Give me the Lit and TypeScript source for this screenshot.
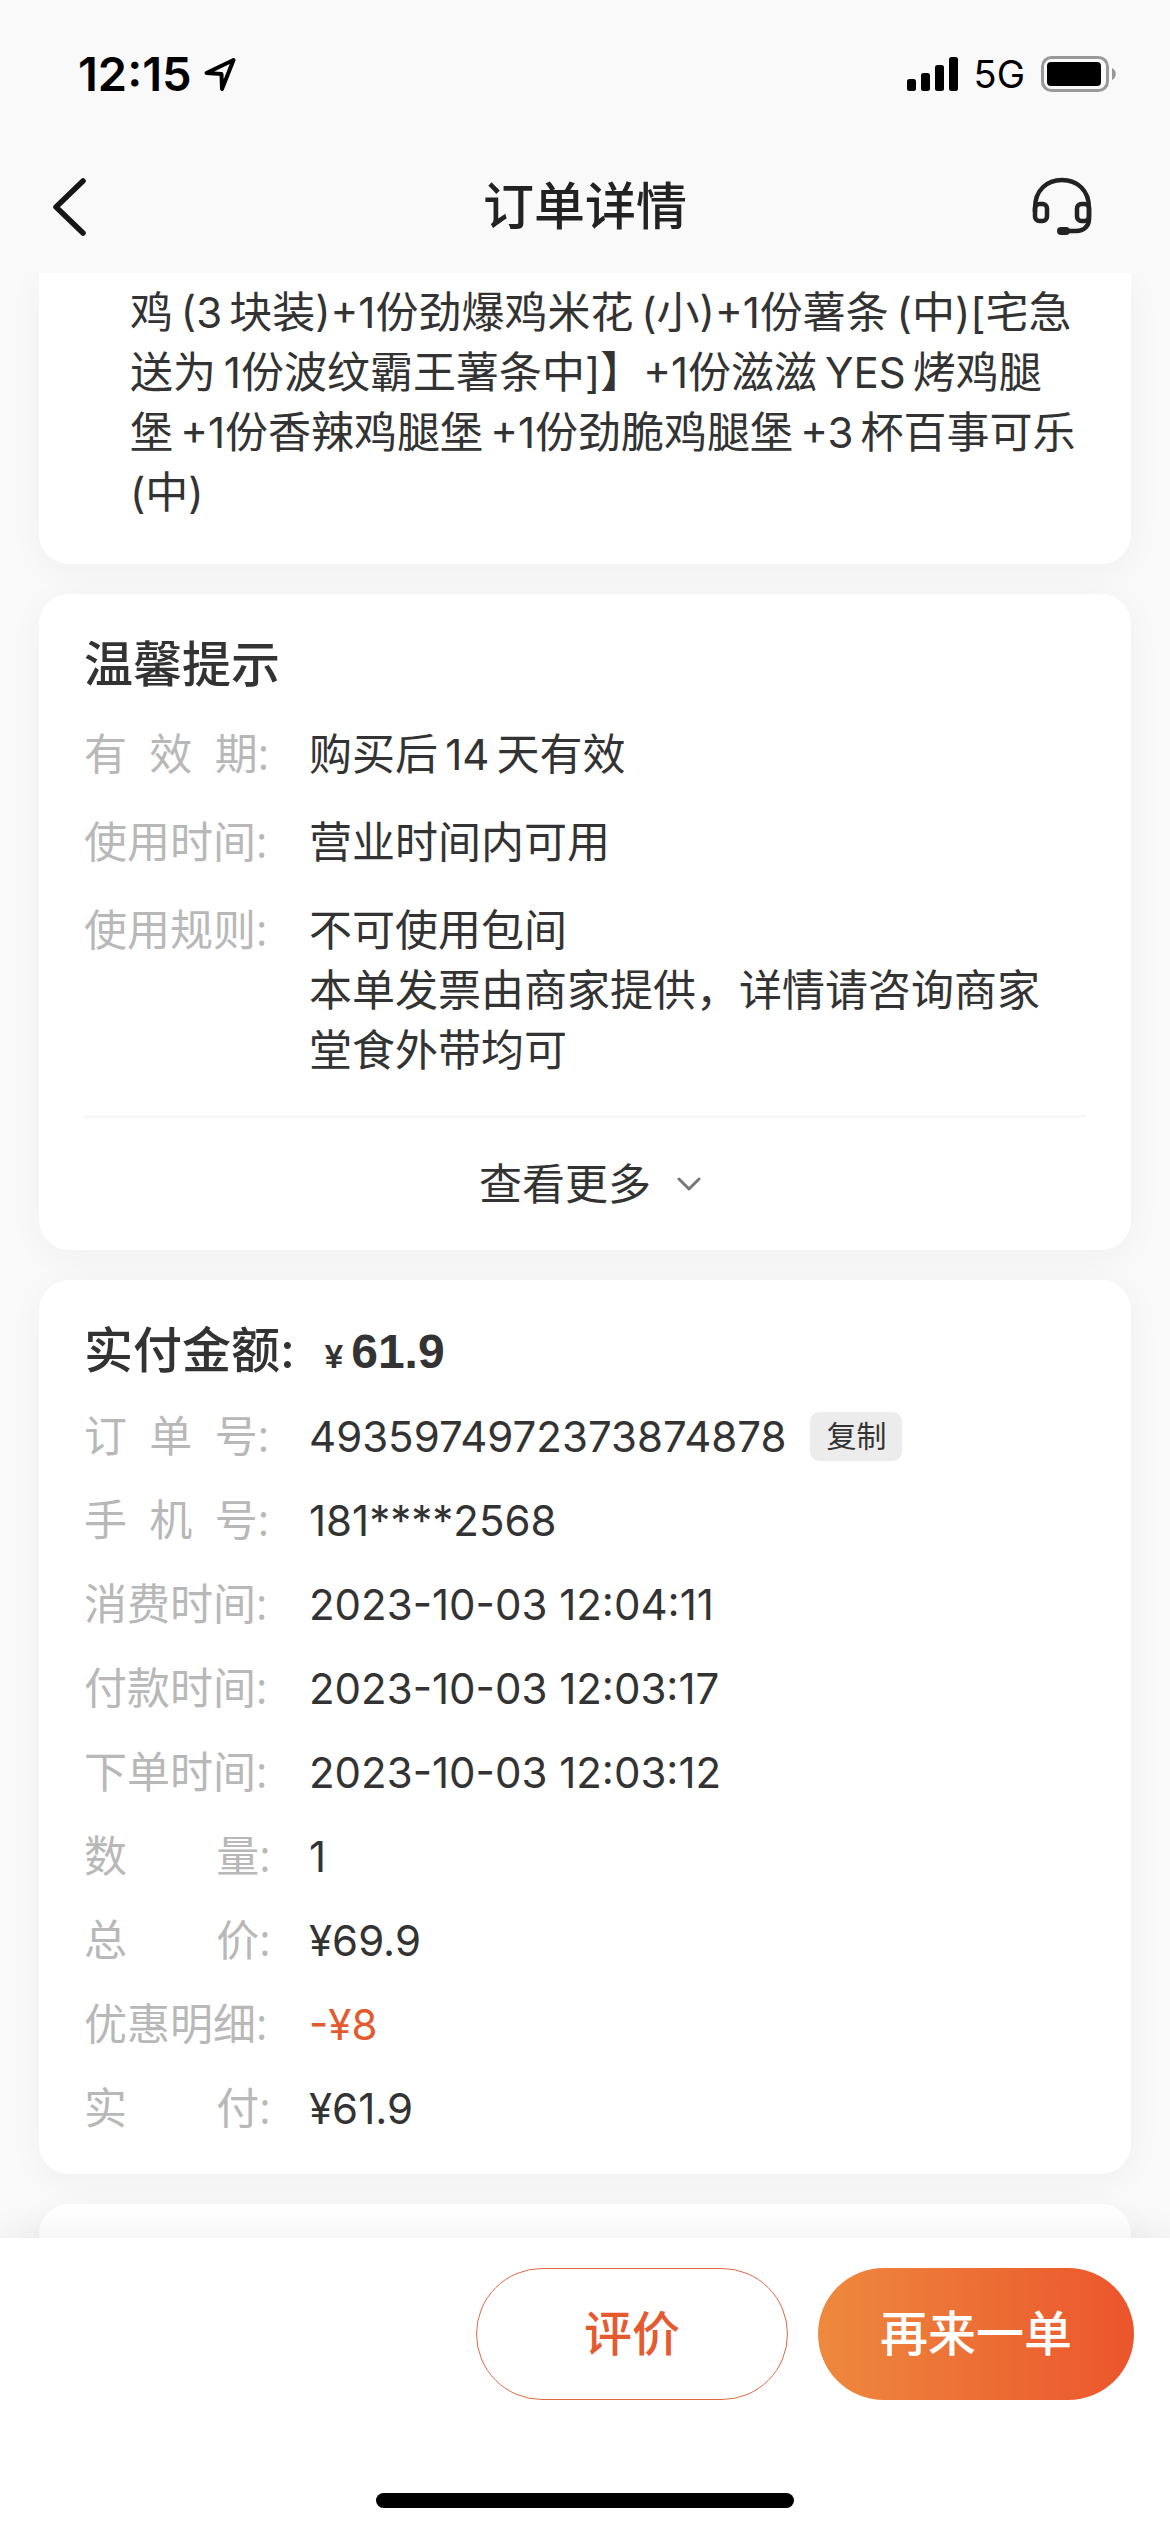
import { LitElement, html, css, svg } from "lit";
import { customElement } from "lit/decorators.js";

interface Row {
  label: string;
  value: string | string[];
  tone?: "accent";
  copyable?: boolean;
}

const PACKAGE_LINES = [
  "鸡\u2009(3\u2006块装)+1份劲爆鸡米花\u2009(小)+1份薯条\u2009(中)[宅急",
  "送为\u20091份波纹霸王薯条中]】+1份滋滋\u2009YES\u2006烤鸡腿",
  "堡\u2006+1份香辣鸡腿堡\u2006+1份劲脆鸡腿堡\u2006+3\u2006杯百事可乐",
  "(中)",
];

const TIPS: Row[] = [
  { label: "有  效  期:", value: "购买后\u200614\u2006天有效" },
  { label: "使用时间:", value: "营业时间内可用" },
  {
    label: "使用规则:",
    value: ["不可使用包间", "本单发票由商家提供，详情请咨询商家", "堂食外带均可"],
  },
];

const ORDER: Row[] = [
  { label: "订  单  号:", value: "4935974972373874878", copyable: true },
  { label: "手  机  号:", value: "181****2568" },
  { label: "消费时间:", value: "2023-10-03 12:04:11" },
  { label: "付款时间:", value: "2023-10-03 12:03:17" },
  { label: "下单时间:", value: "2023-10-03 12:03:12" },
  { label: "数        量:", value: "1" },
  { label: "总        价:", value: "¥69.9" },
  { label: "优惠明细:", value: "-¥8", tone: "accent" },
  { label: "实        付:", value: "¥61.9" },
];

/** Splits a string so that Latin runs can be set slightly smaller than Chinese ones. */
const mixed = (text: string) =>
  text
    .split(/([\x20-\x7e¥]+)/)
    .filter((part) => part !== "")
    .map((part) =>
      /^[\x20-\x7e¥]+$/.test(part) ? html`<span class="latin">${part}</span>` : part,
    );

const locationIcon = svg`<svg class="icon" width="32" height="34" viewBox="0 0 32 34" fill="none" stroke="#000" stroke-width="4" stroke-linejoin="round" aria-hidden="true"><path d="M2.500 16L29.500 3L18 32L17.500 17Z"/></svg>`;

const signalIcon = svg`<svg class="icon" width="51" height="34" viewBox="0 0 51 34" aria-hidden="true"><rect y="22" width="9" height="12" rx="2.500"/><rect x="14" y="16" width="9" height="18" rx="2.500"/><rect x="28" y="8" width="9" height="26" rx="2.500"/><rect x="42" width="9" height="34" rx="2.500"/></svg>`;

const batteryIcon = svg`<svg class="icon" width="75" height="36" viewBox="0 0 75 36" aria-hidden="true"><rect x="1.500" y="1.500" width="65" height="33" rx="9" fill="none" stroke="#999" stroke-width="3"/><rect x="6" y="6" width="54" height="24" rx="4"/><path d="M71 12c5 2 5 10 0 12z" fill="#999"/></svg>`;

const backIcon = svg`<svg class="icon" width="36" height="60" viewBox="0 0 36 60" fill="none" stroke="#161616" stroke-width="5.500" stroke-linecap="round" stroke-linejoin="round" aria-hidden="true"><path d="M32 4L5 30L32 56"/></svg>`;

const headsetIcon = svg`<svg class="icon" width="60" height="60" viewBox="0 0 60 60" fill="none" stroke="#222" stroke-width="4.500" aria-hidden="true"><path d="M3 35V31C3 13 15 3 30 3S57 13 57 31V42C57 49 52 54 44 54H32"/><rect x="3" y="27" width="12" height="17" rx="4.500"/><rect x="45" y="27" width="12" height="17" rx="4.500"/><rect x="25" y="50" width="13" height="8" rx="4" fill="#222" stroke="none"/></svg>`;

const chevronIcon = svg`<svg class="icon" width="24" height="14" viewBox="0 0 24 14" fill="none" stroke="#777" stroke-width="3" stroke-linecap="round" stroke-linejoin="round" aria-hidden="true"><path d="M2 2L12 12L22 2"/></svg>`;

@customElement("app-root")
export class AppRoot extends LitElement {
  static styles = css`
    :host {
      display: flex;
      flex-direction: column;
      height: 100vh;
      overflow: hidden;
      background: #f9f9f9;
      color: #333;
      font-family: Inter, "Noto Sans CJK SC", sans-serif;
      font-size: 43px;
      line-height: 60px;
    }
    * {
      box-sizing: border-box;
    }
    h1, h2, p, dl, dd {
      margin: 0;
    }
    button {
      margin: 0;
      padding: 0;
      border: 0;
      background: none;
      color: inherit;
      font: inherit;
    }
    .icon {
      display: block;
      flex: none;
    }
    .latin {
      font-size: 42px;
      line-height: 1;
    }
    .status {
      display: flex;
      justify-content: space-between;
      align-items: center;
      padding: 44px 54px 0 78px;
      color: #000;
    }
    .time, .signals {
      display: flex;
      align-items: center;
    }
    .time {
      gap: 12px;
      font-size: 47px;
      font-weight: 600;
    }
    .signals {
      gap: 16px;
      font-size: 38px;
    }
    .nav {
      display: grid;
      grid-template-columns: 1fr auto 1fr;
      align-items: center;
      height: 132px;
      margin-top: 37px;
      color: #222;
    }
    .back {
      justify-self: start;
      padding: 0 51px;
    }
    .service {
      justify-self: end;
      padding: 0 78px;
    }
    .title {
      font-size: 51px;
      font-weight: 500;
    }
    .content {
      display: flex;
      flex: 1;
      flex-direction: column;
      gap: 30px;
      min-height: 0;
      overflow: hidden;
      padding: 0 39px;
    }
    .card {
      flex: none;
      padding: 41px 45px 36px;
      border-radius: 30px;
      background: #fff;
      box-shadow: 0 6px 36px rgba(0, 0, 0, 0.04);
    }
    .package {
      padding: 9px 45px 42px 91px;
      border-radius: 0 0 30px 30px;
      white-space: nowrap;
    }
    .tips {
      padding-bottom: 0;
    }
    .next {
      min-height: 120px;
    }
    .heading {
      display: flex;
      align-items: baseline;
      height: 60px;
      font-size: 49px;
      font-weight: 500;
    }
    .currency, .amount {
      font-family: "Liberation Sans", sans-serif;
      font-weight: 700;
    }
    .currency {
      margin: 0 8px 0 30px;
      font-size: 33px;
    }
    .amount {
      font-size: 48px;
    }
    .rows {
      display: flex;
      flex-direction: column;
      gap: 24px;
      margin-top: 25px;
    }
    .tips .rows {
      gap: 28px;
      margin-top: 29px;
    }
    .row {
      display: flex;
    }
    .label {
      flex: none;
      width: 225px;
      color: #b8b8b8;
      font-family: "Open Sans", "Noto Sans CJK SC", sans-serif;
      white-space: pre;
    }
    .value {
      display: flex;
      flex-wrap: wrap;
      align-items: center;
      gap: 0 24px;
    }
    .line {
      display: block;
      width: 100%;
    }
    .accent {
      color: #e45a2f;
    }
    .copy {
      height: 49px;
      padding: 0 16px;
      border-radius: 9px;
      background: #ececec;
      font-size: 30px;
      line-height: 49px;
    }
    .more {
      display: flex;
      align-items: center;
      justify-content: center;
      gap: 26px;
      width: 100%;
      height: 135px;
      margin-top: 35px;
      padding-left: 10px;
      border-top: 3px solid #f8f8f8;
    }
    .actions {
      position: relative;
      display: flex;
      flex: none;
      flex-direction: column;
      padding: 30px 36px 24px;
      background: #fff;
      box-shadow: 0 0 36px rgba(0, 0, 0, 0.08);
    }
    .buttons {
      display: flex;
      justify-content: flex-end;
      gap: 30px;
    }
    .action {
      height: 132px;
      padding: 0 60px;
      border-radius: 66px;
      font-size: 48px;
      font-weight: 500;
    }
    .review {
      min-width: 312px;
      border: 1px solid #dc6a45;
      color: #e65a30;
    }
    .again {
      min-width: 316px;
      background: linear-gradient(90deg, #ee893e, #eb552c);
      color: #fff;
    }
    .home {
      align-self: center;
      width: 418px;
      height: 15px;
      margin-top: 93px;
      border-radius: 8px;
      background: #000;
    }
  `;

  private renderRow(row: Row) {
    const lines = Array.isArray(row.value) ? row.value : null;
    return html`
      <div class="row">
        <dt class="label">${row.label}</dt>
        <dd class="value ${row.tone ?? ""}">
          ${lines
            ? lines.map((line) => html`<span class="line">${line}</span>`)
            : html`<span>${mixed(row.value as string)}</span>`}
          ${row.copyable ? html`<button class="copy" type="button">复制</button>` : ""}
        </dd>
      </div>
    `;
  }

  render() {
    return html`
      <div class="status">
        <div class="time"><span>12:15</span>${locationIcon}</div>
        <div class="signals">${signalIcon}<span>5G</span>${batteryIcon}</div>
      </div>
      <header class="nav">
        <button class="back" type="button" aria-label="返回">${backIcon}</button>
        <h1 class="title">订单详情</h1>
        <button class="service" type="button" aria-label="客服">${headsetIcon}</button>
      </header>
      <main class="content">
        <section class="card package">
          <p>${PACKAGE_LINES.map((line) => html`<span class="line">${mixed(line)}</span>`)}</p>
        </section>
        <section class="card tips">
          <h2 class="heading">温馨提示</h2>
          <dl class="rows">${TIPS.map((row) => this.renderRow(row))}</dl>
          <button class="more" type="button"><span>查看更多</span>${chevronIcon}</button>
        </section>
        <section class="card">
          <h2 class="heading">
            实付金额:<span class="currency">¥</span><span class="amount">61.9</span>
          </h2>
          <dl class="rows">${ORDER.map((row) => this.renderRow(row))}</dl>
        </section>
        <section class="card next"></section>
      </main>
      <footer class="actions">
        <div class="buttons">
          <button class="action review" type="button">评价</button>
          <button class="action again" type="button">再来一单</button>
        </div>
        <div class="home"></div>
      </footer>
    `;
  }
}
